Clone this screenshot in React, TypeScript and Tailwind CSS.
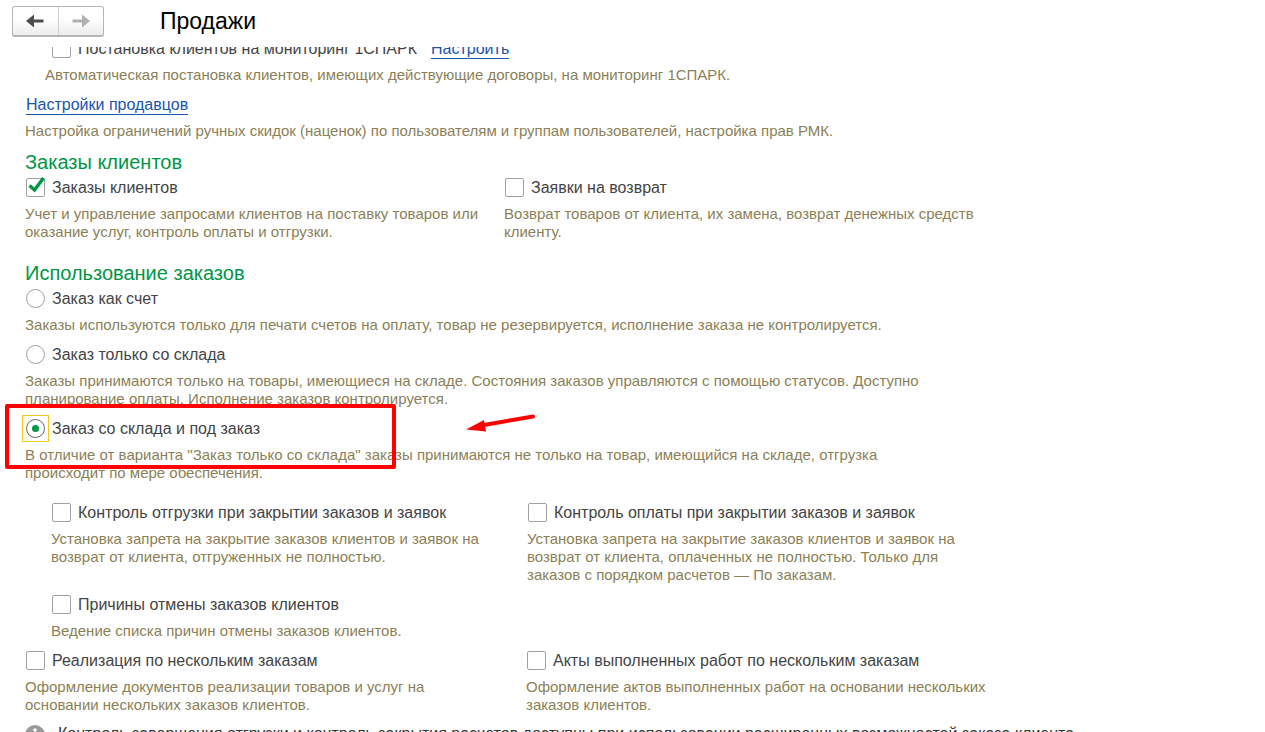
import { useState } from 'react';
import type { ReactNode } from 'react';
import { clsx } from 'clsx';

type Mode = 'invoice' | 'stock' | 'stockAndOrder';

type OptionProps = {
  label: string;
  children: ReactNode;
  defaultChecked?: boolean;
};

const Hint = ({ children }: { children: ReactNode }) => (
  <p className="mt-[7px] text-[15px] leading-[18px] text-[#8b7f57]">{children}</p>
);

const CheckBox = ({ label, defaultChecked }: { label: string; defaultChecked?: boolean }) => (
  <label className="flex h-5 items-start gap-[7px] leading-5">
    <span className="relative ml-px block size-[19px] shrink-0">
      <input
        type="checkbox"
        defaultChecked={defaultChecked}
        className="peer block size-[19px] appearance-none rounded-[2px] border border-[#a0a0a0] bg-white outline-none"
      />
      <svg
        viewBox="0 0 19 19"
        className="pointer-events-none absolute inset-0 hidden size-[19px] overflow-visible peer-checked:block"
      >
        <path d="M3.5 7.5 L8.5 12 L17.5 0" fill="none" stroke="#009646" strokeWidth="3.5" />
      </svg>
    </span>
    {label}
  </label>
);

const CheckOption = ({ label, children, defaultChecked }: OptionProps) => (
  <div>
    <CheckBox label={label} defaultChecked={defaultChecked} />
    <Hint>{children}</Hint>
  </div>
);

type RadioOptionProps = {
  label: string;
  value: Mode;
  mode: Mode;
  onChange: (mode: Mode) => void;
  children: ReactNode;
};

const RadioOption = ({ label, value, mode, onChange, children }: RadioOptionProps) => {
  const selected = mode === value;
  return (
    <div>
      <label className="flex h-5 items-start gap-[7px] leading-5">
        <span
          className={clsx(
            'relative ml-px block size-[19px] shrink-0 rounded-full',
            selected && "before:absolute before:-inset-1 before:border before:border-[#f2c91d] before:content-['']"
          )}
        >
          <input
            type="radio"
            name="order-mode"
            checked={selected}
            onChange={() => onChange(value)}
            className="peer relative block size-[19px] appearance-none rounded-full border border-[#a0a0a0] bg-white outline-none checked:border-[#666]"
          />
          <span className="pointer-events-none absolute inset-[6px] hidden rounded-full bg-[#009646] peer-checked:block" />
        </span>
        {label}
      </label>
      <Hint>{children}</Hint>
    </div>
  );
};

const SectionTitle = ({ children }: { children: ReactNode }) => (
  <h2 className="mb-[5px] text-xl leading-[22px] text-[#009646]">{children}</h2>
);

const TextLink = ({ href, children }: { href: string; children: ReactNode }) => (
  <a href={href} className="border-b border-[#1a53b0] leading-[18px] text-[#1a53b0]">{children}</a>
);

const ArrowIcon = ({ className }: { className?: string }) => (
  <svg viewBox="0 0 18 14" className={clsx('h-[14px] w-[18px]', className)} fill="currentColor">
    <path d="M0 7 L8 0.5 V5.5 H17.5 V8.5 H8 V13.5 Z" />
  </svg>
);

const App = () => {
  const [mode, setMode] = useState<Mode>('stockAndOrder');

  return (
    <div className="flex h-screen flex-col overflow-hidden bg-white font-['Liberation_Sans',Arial,sans-serif] text-base text-[#444]">
      <header className="flex h-[47px] shrink-0 items-center gap-14 px-3 pb-[5px]">
        <div className="flex h-[31px] w-[92px] rounded-[3px] border border-b-2 border-[#b5b5b5] bg-gradient-to-b from-white from-40% to-[#ececec]">
          <button type="button" aria-label="Назад" className="flex flex-1 items-center justify-center border-r border-[#d0d0d0] text-[#4d4d4d]">
            <ArrowIcon />
          </button>
          <button type="button" aria-label="Вперед" className="flex flex-1 items-center justify-center text-[#b0b0b0]">
            <ArrowIcon className="rotate-180" />
          </button>
        </div>
        <h1 className="text-[23px] leading-7 text-black">Продажи</h1>
      </header>

      <main className="min-h-0 flex-1 overflow-hidden">
        <div className="-mt-2 flex flex-col gap-[11px] pl-[25px]">
          {/* scrolled partly under the header */}
          <div>
            <div className="flex items-center gap-[14px] pl-[26px]">
              <CheckBox label="Постановка клиентов на мониторинг 1СПАРК" />
              <TextLink href="#spark">Настроить</TextLink>
            </div>
            <div className="pl-5">
              <Hint>Автоматическая постановка клиентов, имеющих действующие договоры, на мониторинг 1СПАРК.</Hint>
            </div>
          </div>

          <div>
            <div className="flex h-5 items-center pl-px">
              <TextLink href="#sellers">Настройки продавцов</TextLink>
            </div>
            <Hint>Настройка ограничений ручных скидок (наценок) по пользователям и группам пользователей, настройка прав РМК.</Hint>
          </div>

          <section className="mb-[10px] max-w-[975px]">
            <SectionTitle>Заказы клиентов</SectionTitle>
            <div className="grid grid-cols-[469px_1fr] gap-x-[10px]">
              <CheckOption label="Заказы клиентов" defaultChecked>
                Учет и управление запросами клиентов на поставку товаров или оказание услуг, контроль оплаты и отгрузки.
              </CheckOption>
              <CheckOption label="Заявки на возврат">
                Возврат товаров от клиента, их замена, возврат денежных средств клиенту.
              </CheckOption>
            </div>
          </section>

          <section className="max-w-[920px]">
            <SectionTitle>Использование заказов</SectionTitle>
            <div className="flex flex-col gap-[11px]">
              <RadioOption label="Заказ как счет" value="invoice" mode={mode} onChange={setMode}>
                Заказы используются только для печати счетов на оплату, товар не резервируется, исполнение заказа не контролируется.
              </RadioOption>
              <RadioOption label="Заказ только со склада" value="stock" mode={mode} onChange={setMode}>
                Заказы принимаются только на товары, имеющиеся на складе. Состояния заказов управляются с помощью статусов. Доступно планирование оплаты. Исполнение заказов контролируется.
              </RadioOption>
              <div className="relative">
                <RadioOption label="Заказ со склада и под заказ" value="stockAndOrder" mode={mode} onChange={setMode}>
                  В отличие от варианта "Заказ только со склада" заказы принимаются не только на товар, имеющийся на складе, отгрузка происходит по мере обеспечения.
                </RadioOption>
                {/* annotation: frame and pointer */}
                <div className="pointer-events-none absolute -top-[15px] -left-5 h-[65px] w-[391px] rounded-[2px] border-4 border-[#ff0000]" />
                <svg viewBox="0 0 70 20" className="pointer-events-none absolute -top-[6px] left-[441px] h-5 w-[70px]">
                  <path d="M18 12 L67 3.5" stroke="#ff0000" strokeWidth="4" strokeLinecap="round" />
                  <path d="M0 16.5 L18 7 L20 18.5 Z" fill="#ff0000" />
                </svg>
              </div>
            </div>
          </section>

          <div className="mt-[10px] grid grid-cols-[450px_450px] gap-x-[26px] gap-y-[11px] pl-[26px]">
            <CheckOption label="Контроль отгрузки при закрытии заказов и заявок">
              Установка запрета на закрытие заказов клиентов и заявок на возврат от клиента, отгруженных не полностью.
            </CheckOption>
            <CheckOption label="Контроль оплаты при закрытии заказов и заявок">
              Установка запрета на закрытие заказов клиентов и заявок на возврат от клиента, оплаченных не полностью. Только для заказов с порядком расчетов — По заказам.
            </CheckOption>
            <CheckOption label="Причины отмены заказов клиентов">
              Ведение списка причин отмены заказов клиентов.
            </CheckOption>
          </div>

          <div className="grid grid-cols-[450px_490px] gap-x-[51px]">
            <CheckOption label="Реализация по нескольким заказам">
              Оформление документов реализации товаров и услуг на основании нескольких заказов клиентов.
            </CheckOption>
            <CheckOption label="Акты выполненных работ по нескольким заказам">
              Оформление актов выполненных работ на основании нескольких заказов клиентов.
            </CheckOption>
          </div>

          <div className="flex h-5 items-start gap-[13px]">
            <svg viewBox="0 0 20 20" className="size-5 shrink-0">
              <circle cx="10" cy="10" r="10" fill="#999" />
              <circle cx="10" cy="5" r="1.8" fill="#fff" />
              <path d="M7.5 8.5 H11.5 V14 H13 V16 H7.5 V14 H9 V10.5 H7.5 Z" fill="#fff" />
            </svg>
            <p className="whitespace-nowrap leading-[18px] text-[#333]">
              Контроль завершения отгрузки и контроль закрытия расчетов доступны при использовании расширенных возможностей заказа клиента.
            </p>
          </div>
        </div>
      </main>
    </div>
  );
};

export default App;
